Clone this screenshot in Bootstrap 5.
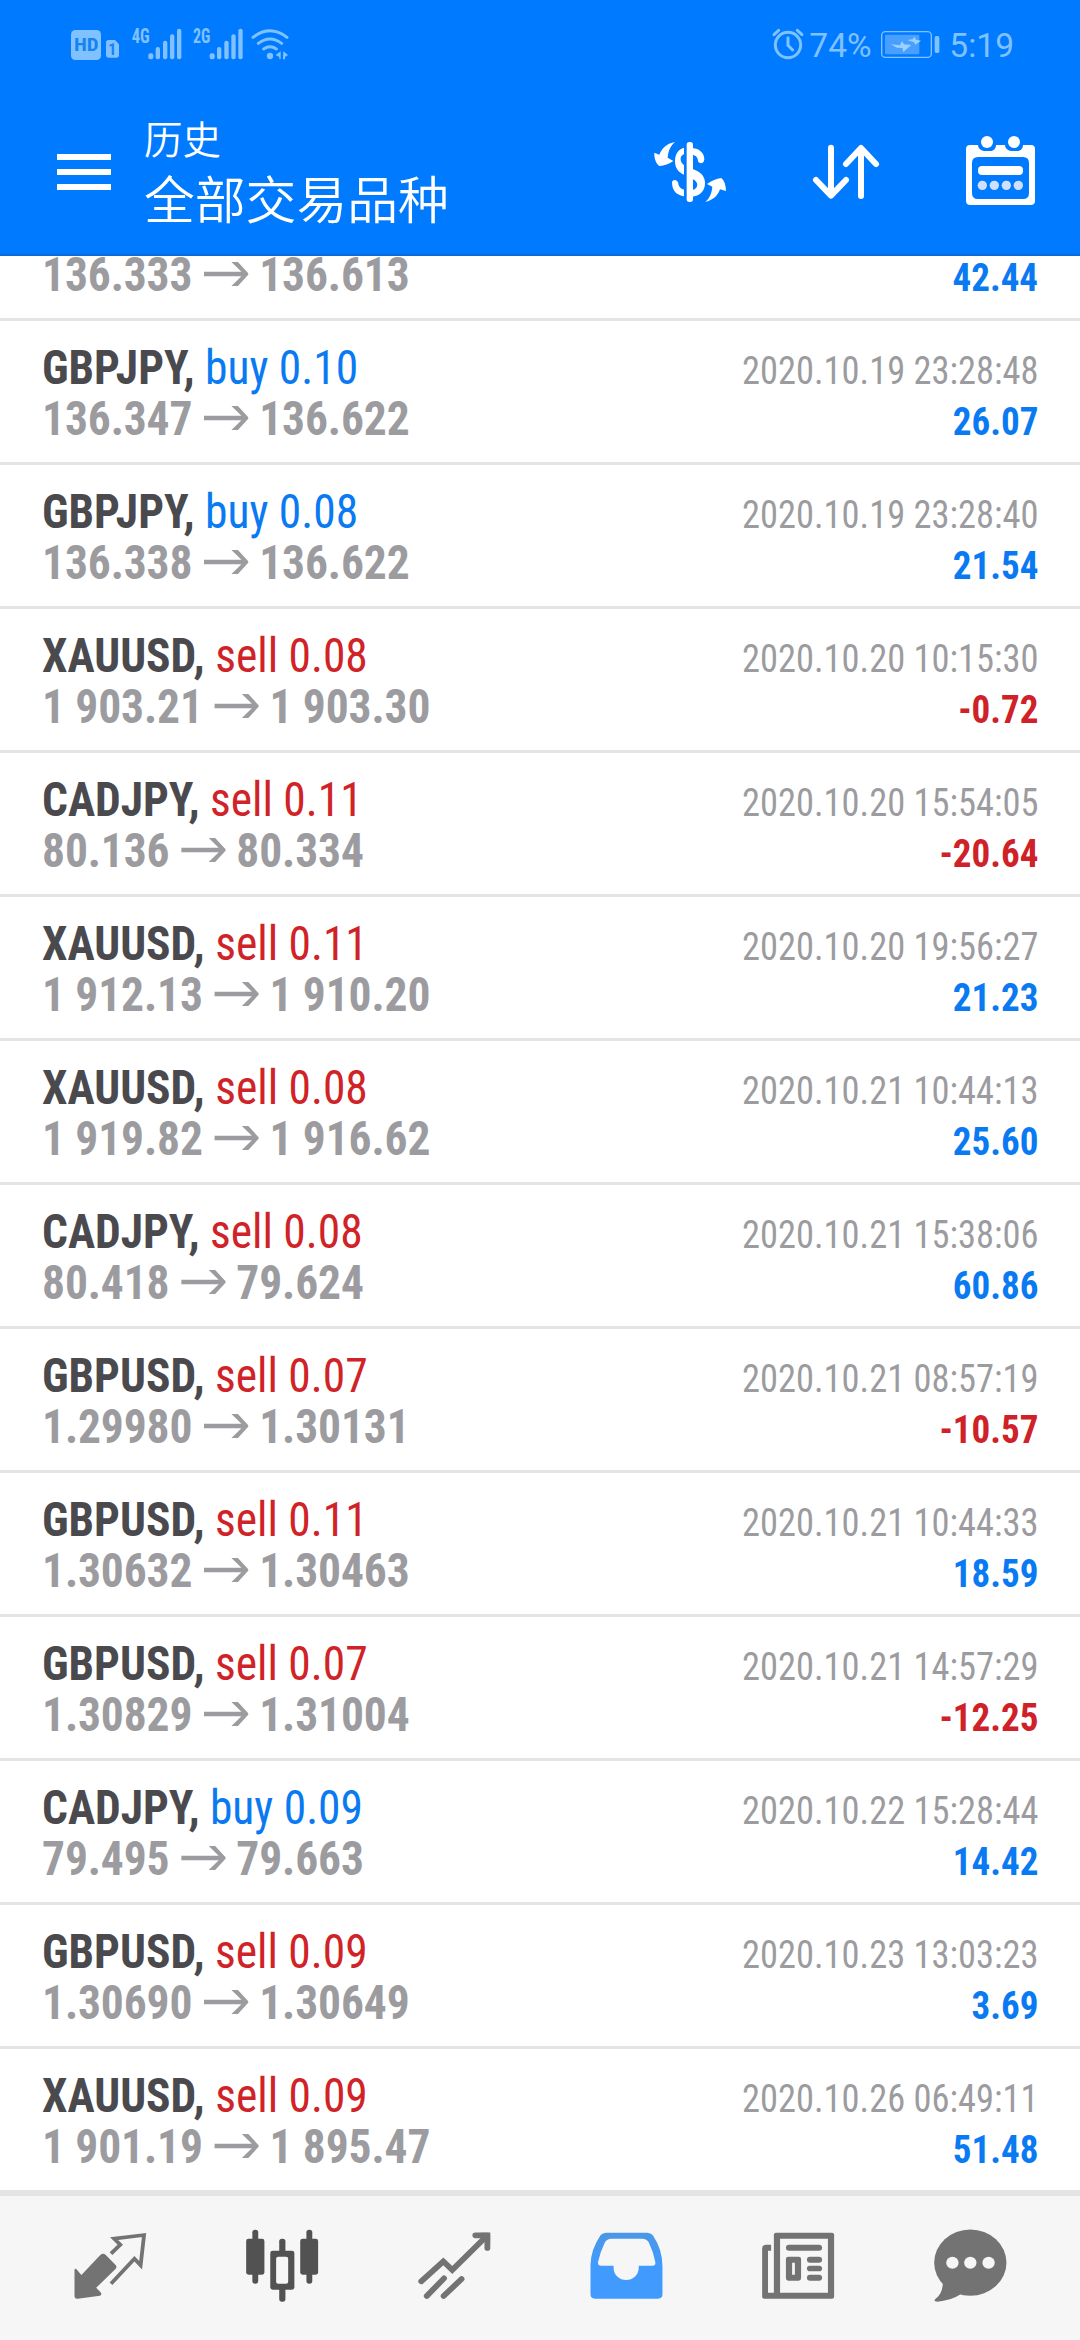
<!DOCTYPE html>
<html lang="zh-CN">
<head>
<meta charset="utf-8">
<meta name="viewport" content="width=device-width, initial-scale=1">
<title>历史</title>
<link href="https://cdn.jsdelivr.net/npm/bootstrap@5.3.0/dist/css/bootstrap.min.css" rel="stylesheet">
<style>
:root{--blue:#007aff;--buy:#0a7af2;--sell:#d02328;--grey:#9c9ca0;--line:#e4e4e4}
body{width:1080px;height:2340px;font-family:"Roboto Condensed",Roboto,"Noto Sans CJK SC",sans-serif;background:#fff}
svg{display:block;flex:none}
.topbar{height:256px;background:linear-gradient(var(--blue) 253px,#0d66cc 256px)}
.statusbar{height:90px;padding:10px 40px 0 50px}
.appbar{height:166px;padding:0 40px 0 57px}
.burger{width:54px;gap:9px;margin-top:64px}
.burger i{height:6px;background:#fff}
.titles{margin:0 auto 0 33px;padding-top:24px;font-family:"Noto Sans CJK SC",sans-serif;font-weight:350;white-space:nowrap}
.subtitle-s{font-size:38.5px;line-height:46px}
.title-l{font-size:50.8px;line-height:60px;margin-top:7px}
.tools{margin-top:40px}
.trade{height:144px;border-bottom:3px solid var(--line);padding:0 41.5px;flex:none;white-space:nowrap}
.trade.cut{height:65px}
.lft{font-size:48px;line-height:51px;padding-bottom:18px;transform:scaleX(.947);transform-origin:0 0}
.rgt{font-size:39.4px;line-height:51px;padding-bottom:15px;text-align:right}
.rgt div{transform-origin:100% 0;transform:scaleX(.925)}
.rgt .profit{transform:scaleX(.94)}
.sym{font-weight:700;color:#4a4a4e}
.px{font-weight:700;color:var(--grey);letter-spacing:-.1px}
.px svg{display:inline-block;margin:0 11px 0 12px;vertical-align:5px}
.when{color:var(--grey)}
.buy{color:var(--buy)}.sell{color:var(--sell)}
.profit{font-weight:700;color:var(--buy)}
.loss{color:#cf2128}
.tabs{height:147px;border-top:3px solid var(--line);background:#f6f6f6;padding-top:27.3px}
.tabs a{width:172px}
</style>
</head>
<body class="d-flex flex-column overflow-hidden m-0">
<header class="topbar flex-shrink-0">
  <div class="statusbar d-flex justify-content-between">
    <svg width="260" height="70" viewBox="0 0 780 210" fill="#80c2ff" font-family="Roboto Condensed">
      <rect x="63" y="60" width="90" height="90" rx="13"/>
      <text x="72" y="124" font-size="56" font-weight="700" fill="#1683f5" textLength="74" lengthAdjust="spacingAndGlyphs">HD</text>
      <path d="M176 90H195L207 103V136Q207 143 200 143H175Q168 143 168 136V98Q168 90 176 90Z"/>
      <text x="175" y="135" font-size="48" font-weight="700" fill="#1683f5">1</text>
      <text x="245" y="98" font-size="59" font-weight="700" textLength="54" lengthAdjust="spacingAndGlyphs">4G</text>
      <text x="429" y="98" font-size="59" font-weight="700" textLength="52" lengthAdjust="spacingAndGlyphs">2G</text>
      <g id="bars"><rect x="295" y="130" width="15" height="18" rx="6"/><rect x="317" y="111" width="13" height="37" rx="6"/><rect x="339" y="92" width="13" height="56" rx="6"/><rect x="360" y="73" width="13" height="75" rx="6"/><rect x="381" y="56" width="13" height="92" rx="6"/></g>
      <use href="#bars" x="184"/>
      <circle cx="660" cy="138" r="9.500"/>
      <path d="M609 82Q660 43 711 82M625 100Q660 74 695 100M641 117Q660 104 679 117" fill="none" stroke="#80c2ff" stroke-width="9" stroke-linecap="round"/>
      <path d="M692 124V147H688V141L677 135ZM700 124L714 135L705 141V148H699Z"/>
    </svg>
    <svg width="290" height="70" viewBox="0 0 870 210" fill="#80c2ff" font-family="Roboto">
      <g fill="none" stroke="#80c2ff" stroke-width="9" stroke-linecap="round"><circle cx="114" cy="105" r="38"/><path d="M114 83V106L128 120M72 74L86 61M142 61L156 74"/></g>
      <text x="178" y="141" font-size="100" textLength="187" lengthAdjust="spacingAndGlyphs">74%</text>
      <rect x="395" y="65" width="149" height="77" rx="11" fill="none" stroke="#80c2ff" stroke-width="4"/>
      <rect x="405" y="74" width="103" height="59" rx="4" fill="#489fff"/>
      <rect x="554" y="78" width="14" height="51" rx="5"/>
      <path d="M422 103L450 106L456 93L462 103L484 105L460 126L457 114L441 113ZM472 90L488 88L493 80L498 89L513 92L496 104L492 97Z" fill="#9bd0ff"/>
      <text x="598" y="141" font-size="101" textLength="194" lengthAdjust="spacingAndGlyphs">5:19</text>
    </svg>
  </div>
  <nav class="appbar d-flex align-items-start text-white">
    <div class="burger d-flex flex-column"><i></i><i></i><i></i></div>
    <div class="titles"><div class="subtitle-s">历史</div><div class="title-l">全部交易品种</div></div>
    <div class="tools d-flex">
      <svg width="80" height="80" viewBox="60 60 240 240" fill="#fff">
        <path d="M135 96C112 100 96 113 88 134L73 128C72 145 78 160 88 168Q111 167 130 153L113 143C115 121 122 108 135 96Z"/>
        <path d="M226 276C246 271 263 260 270 238L288 243C288 226 283 212 274 204Q252 207 231 222L247 230C245 250 239 264 226 276Z"/>
        <rect x="170" y="96" width="19" height="180" rx="8"/>
        <path d="M188 114C207 116 223 128 223 148Q222 160 212 160Q203 158 203 147Q200 137 188 134ZM162 113V133C151 137 150 148 155 158L162 166V194C145 188 135 173 135 154C135 132 145 118 162 113ZM188 177C213 186 225 199 225 219C225 242 211 257 188 260V240C206 235 207 216 188 207ZM126 217Q127 210 136 210Q145 213 146 226Q151 237 162 239V259C141 256 126 243 126 217Z"/>
      </svg>
      <svg width="80" height="80" viewBox="540 60 240 240" fill="none" stroke="#fff" stroke-width="18" stroke-linecap="round" stroke-linejoin="round" style="margin-left:80px">
        <path d="M603 113V256M558 210L603 257L648 210M693 258V116M648 162L693 114L738 162"/>
      </svg>
      <svg width="80" height="80" viewBox="990 60 240 240" fill="#fff" style="margin-left:70px">
        <path fill-rule="evenodd" d="M1020 105H1044C1045 117 1055 123 1067 123H1080C1092 123 1098 115 1098 105H1125C1126 117 1136 123 1148 123H1161C1173 123 1179 115 1179 105H1203Q1215 105 1215 117V272Q1215 285 1202 285H1021Q1008 285 1008 272V117Q1008 105 1020 105ZM1044 141Q1026 141 1026 159V249Q1026 267 1044 267H1179Q1197 267 1197 249V159Q1197 141 1179 141Z"/>
        <circle cx="1071" cy="96" r="18"/><circle cx="1152" cy="96" r="18"/>
        <rect x="1044" y="168" width="135" height="27" rx="12"/>
        <g fill="#d0e0fc"><circle cx="1057" cy="226" r="14"/><circle cx="1093" cy="226" r="14"/><circle cx="1129" cy="226" r="14"/><circle cx="1165" cy="226" r="14"/></g>
      </svg>
    </div>
  </nav>
</header>
<main id="trades" class="flex-grow-1 d-flex flex-column justify-content-end overflow-hidden"></main>
<footer class="tabs d-flex justify-content-center flex-shrink-0">
  <a class="d-flex justify-content-center"><svg width="82.65" height="80" viewBox="199 160 240 240" preserveAspectRatio="none" fill="#737373"><path d="M215 300Q217 294 222 300L235 316L290 256Q298 248 306 256L335 287Q339 293 334 298L278 354L292 369Q295 376 289 378L224 387Q215 388 215 378Z"/><path d="M321 252L348 225L330 207L417 196L407 287L389 267L321 342" fill="none" stroke="#737373" stroke-width="11"/></svg></a>
  <a class="d-flex justify-content-center"><svg width="82.65" height="80" viewBox="699 160 240 240" preserveAspectRatio="none" fill="#525252"><rect x="732" y="180" width="17" height="162" rx="8"/><rect x="714" y="207" width="53" height="108" rx="7"/><rect x="889" y="180" width="17" height="162" rx="8"/><rect x="871" y="207" width="52" height="108" rx="7"/><rect x="810" y="207" width="18" height="189" rx="8"/><rect x="784" y="243" width="70" height="117" rx="7"/><rect x="801" y="261" width="35" height="81" rx="6" fill="#f6f6f6"/></svg></a>
  <a class="d-flex justify-content-center"><svg width="82.65" height="80" viewBox="1198 160 240 240" preserveAspectRatio="none" fill="none" stroke="#737373" stroke-width="17"><path d="M1222 335L1286 275L1312 301L1412 199" stroke-linecap="round"/><path d="M1379 197H1414V235M1238 379L1288 326M1287 379L1339 328" stroke-linecap="round"/><path d="M1395 189H1416Q1422 189 1422 195V216Z" fill="#737373" stroke="none"/></svg></a>
  <a class="d-flex justify-content-center"><svg width="82.65" height="80" viewBox="129 160 240 240" preserveAspectRatio="none"><defs><linearGradient id="tray" x2="0" y2="1"><stop offset="0" stop-color="#4b97e5"/><stop offset=".5" stop-color="#419bff"/></linearGradient></defs><path fill="url(#tray)" fill-rule="evenodd" d="M190 189H310Q320 189 326 197Q354 240 354 290V374Q354 387 341 387H158Q145 387 145 374V285Q146 240 174 197Q180 189 190 189ZM205 207Q193 207 187 218Q173 248 167 276Q165 288 176 288H212V295A36.500 36 0 0 0 285 295V288H326Q335 288 333 276Q328 248 314 218Q308 207 295 207Z"/></svg></a>
  <a class="d-flex justify-content-center"><svg width="82.65" height="80" viewBox="630 160 240 240" preserveAspectRatio="none" fill="#737373"><path fill-rule="evenodd" d="M685 189H848Q854 189 854 195V381Q854 387 848 387H651Q645 387 645 381V237Q645 225 657 225H671V243H662V369H679V195Q679 189 685 189ZM697 207V369H836V207ZM721 261H751Q758 261 758 268V326Q758 333 751 333H721Q714 333 714 326V268Q714 261 721 261ZM732 279V315H740V279Z"/><rect x="714" y="225" width="105" height="18" rx="9"/><rect x="775" y="261" width="44" height="18" rx="9"/><rect x="775" y="288" width="44" height="17" rx="8.500"/><rect x="775" y="315" width="44" height="18" rx="9"/></svg></a>
  <a class="d-flex justify-content-center"><svg width="82.65" height="80" viewBox="1128 160 240 240" preserveAspectRatio="none" fill="#737373"><ellipse cx="1248" cy="279" rx="105" ry="99.500"/><path d="M1168 340C1168 362 1160 378 1147 387Q1139 396 1152 396Q1190 394 1220 374Z"/><g fill="#f6f6f6"><circle cx="1196" cy="279" r="18"/><circle cx="1248" cy="279" r="18"/><circle cx="1301" cy="279" r="18"/></g></svg></a>
</footer>
<script src="https://cdn.jsdelivr.net/npm/bootstrap@5.3.0/dist/js/bootstrap.bundle.min.js"></script>
<script>
const trades = [
  ['', '', '', '136.333', '136.613', '', '42.44'],
  ['GBPJPY', 'buy', '0.10', '136.347', '136.622', '2020.10.19 23:28:48', '26.07'],
  ['GBPJPY', 'buy', '0.08', '136.338', '136.622', '2020.10.19 23:28:40', '21.54'],
  ['XAUUSD', 'sell', '0.08', '1 903.21', '1 903.30', '2020.10.20 10:15:30', '-0.72'],
  ['CADJPY', 'sell', '0.11', '80.136', '80.334', '2020.10.20 15:54:05', '-20.64'],
  ['XAUUSD', 'sell', '0.11', '1 912.13', '1 910.20', '2020.10.20 19:56:27', '21.23'],
  ['XAUUSD', 'sell', '0.08', '1 919.82', '1 916.62', '2020.10.21 10:44:13', '25.60'],
  ['CADJPY', 'sell', '0.08', '80.418', '79.624', '2020.10.21 15:38:06', '60.86'],
  ['GBPUSD', 'sell', '0.07', '1.29980', '1.30131', '2020.10.21 08:57:19', '-10.57'],
  ['GBPUSD', 'sell', '0.11', '1.30632', '1.30463', '2020.10.21 10:44:33', '18.59'],
  ['GBPUSD', 'sell', '0.07', '1.30829', '1.31004', '2020.10.21 14:57:29', '-12.25'],
  ['CADJPY', 'buy', '0.09', '79.495', '79.663', '2020.10.22 15:28:44', '14.42'],
  ['GBPUSD', 'sell', '0.09', '1.30690', '1.30649', '2020.10.23 13:03:23', '3.69'],
  ['XAUUSD', 'sell', '0.09', '1 901.19', '1 895.47', '2020.10.26 06:49:11', '51.48']
];
const arrow = '<svg width="47.500" height="24" viewBox="0 0 45 24" preserveAspectRatio="none" fill="#9c9ca0"><path d="M0 9.800H37.500L27.500 0H34L45 12L34 24H27.500L37.500 14.200H0Z"/></svg>';
document.getElementById('trades').innerHTML = trades.map(([sym, side, lot, from, to, when, profit]) => `
  <div class="trade d-flex justify-content-between align-items-end${sym ? '' : ' cut'}">
    <div class="lft">${sym ? `<div><span class="sym">${sym},</span> <span class="${side}">${side} ${lot}</span></div>` : ''}<div class="px">${from}${arrow}${to}</div></div>
    <div class="rgt">${when ? `<div class="when">${when}</div>` : ''}<div class="profit${profit[0] === '-' ? ' loss' : ''}">${profit}</div></div>
  </div>`).join('');
</script>
</body>
</html>
